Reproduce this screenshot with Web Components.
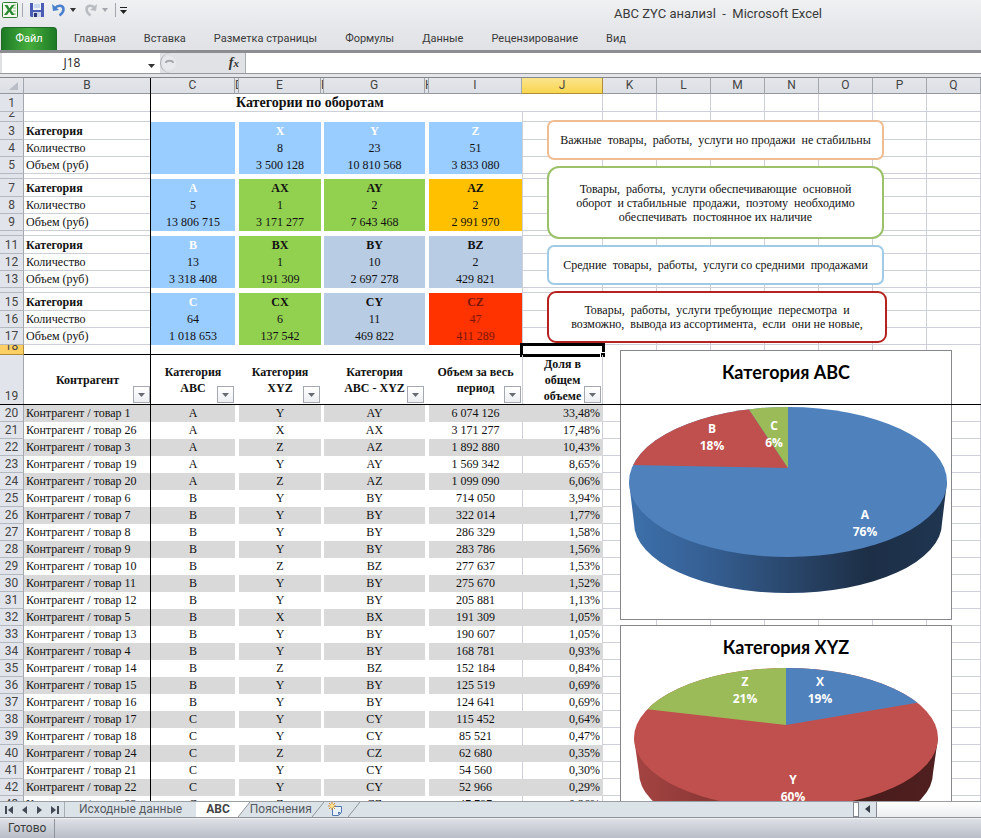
<!DOCTYPE html>
<html lang="ru">
<head>
<meta charset="utf-8">
<title>ABC ZYC анализl - Microsoft Excel</title>
<style>
  html, body { height: 100%; margin: 0; }
  body {
    display: flex;
    flex-direction: column;
    overflow: hidden;
    background: #e3e5e9;
    color: #3b3b3b;
    font: 12px/16px Roboto, "Open Sans", sans-serif;
  }
  work-sheet { flex: 1; min-height: 0; }
</style>
</head>
<body>
<title-bar>ABC ZYC анализl &nbsp;-&nbsp; Microsoft Excel</title-bar>
<ribbon-tabs></ribbon-tabs>
<formula-bar cell="J18"></formula-bar>
<work-sheet>
  <note-box slot="notes" color="#f0bd92">Важные&nbsp; товары,&nbsp; работы,&nbsp; услуги но продажи&nbsp; не стабильны</note-box>
  <note-box slot="notes" color="#9bc268" size="large">Товары,&nbsp; работы,&nbsp; услуги обеспечивающие&nbsp; основной<br>оборот&nbsp; и стабильные&nbsp; продажи,&nbsp; поэтому&nbsp; необходимо<br>обеспечивать&nbsp; постоянное их наличие</note-box>
  <note-box slot="notes" color="#9fcbe6">Средние&nbsp; товары,&nbsp; работы,&nbsp; услуги со средними&nbsp; продажами</note-box>
  <note-box slot="notes" color="#b5221f" size="medium">Товары,&nbsp; работы,&nbsp; услуги требующие&nbsp; пересмотра&nbsp; и<br>возможно,&nbsp; вывода из ассортимента,&nbsp; если&nbsp; они не новые,</note-box>
  <pie-chart slot="charts" kind="abc">Категория ABC</pie-chart>
  <pie-chart slot="charts" kind="xyz">Категория XYZ</pie-chart>
</work-sheet>
<sheet-tabs></sheet-tabs>
<status-bar>Готово</status-bar>

<script>
class TitleBar extends HTMLElement {
  constructor() {
    super();
    this.attachShadow({ mode: "open" });
    this.shadowRoot.innerHTML = `
      <style>
        :host {
          display: grid;
          grid-template-columns: 1fr auto 159px;
          height: 27px;
          background: linear-gradient(#f0f1f3, #e5e7ea);
        }
        .quick { display: flex; align-items: center; height: 20px; padding-left: 2px; }
        button { display: flex; padding: 0; border: 0; background: none; }
        .sep { width: 1px; height: 14px; background: #a3a7ad; }
        .save { margin: 0 8px 0 7px; }
        .excel { margin-right: 4px; }
        .undo, .redo { margin-right: 4px; }
        .redo { margin-left: 8px; }
        .last { margin-left: 7px; margin-right: 4px; }
        h1 { margin: 0; padding-top: 5px; font: 13px/18px Roboto, "Open Sans", sans-serif; }
      </style>
      <div class="quick">
        <button class="excel" aria-label="Excel">
          <svg width="16" height="16" viewBox="0 0 16 16">
            <rect x=".5" y=".5" width="15" height="15" rx="1" fill="#f3faee" stroke="#2f7d32"/>
            <path d="M11 3h3M11 6h3M11 9h3M11 12h3" stroke="#8cbf7e"/>
            <path d="M2.500 3h3l2 3.200L9.800 3h2.700L9 8l3.700 5H9.500L7.300 9.800 5 13H2l3.800-5z" fill="#2d8a34"/>
          </svg>
        </button>
        <span class="sep"></span>
        <button class="save" aria-label="Сохранить">
          <svg width="14" height="14" viewBox="0 0 14 14">
            <path d="M0 0h14v14H1L0 13z" fill="#4a5cb4"/>
            <path d="M3 0h8v7H3z" fill="#eef3fb"/>
            <path d="M4 2h6M4 4h6" stroke="#a6bce0"/>
            <path d="M3 9h8v5H3z" fill="#c9d2e8"/>
            <path d="M4 10h3v4H4z" fill="#2a3678"/>
          </svg>
        </button>
        <button class="undo" aria-label="Отменить">
          <svg width="14" height="14" viewBox="0 0 14 14">
            <path d="M3 5C6 1.500 11.500 2 11.500 6.500c0 2.500-2 4.500-4 6" fill="none" stroke="#4a80cc" stroke-width="2.600"/>
            <path d="M0 1l1 7 6-1z" fill="#4a80cc"/>
          </svg>
        </button>
        <button aria-label="Список отмены"><svg width="6" height="4"><path d="M0 0h6L3 4z" fill="#333"/></svg></button>
        <button class="redo" aria-label="Вернуть">
          <svg width="14" height="14" viewBox="0 0 14 14">
            <path d="M11 5C8 1.500 2.500 2 2.500 6.500c0 2.500 2 4.500 4 6" fill="none" stroke="#b9bcc1" stroke-width="2.600"/>
            <path d="M13 1l-1 7-6-1z" fill="#b9bcc1"/>
          </svg>
        </button>
        <button aria-label="Список возврата"><svg width="6" height="4"><path d="M0 0h6L3 4z" fill="#a4a7ac"/></svg></button>
        <span class="sep last"></span>
        <button aria-label="Настройка панели"><svg width="7" height="7"><path d="M0 0h7v1H0zM0 3h7L3.500 7z" fill="#222"/></svg></button>
      </div>
      <h1><slot></slot></h1>
    `;
  }
}

class RibbonTabs extends HTMLElement {
  constructor() {
    super();
    this.attachShadow({ mode: "open" });
    const tabs = ["Главная", "Вставка", "Разметка страницы", "Формулы", "Данные", "Рецензирование", "Вид"];
    this.shadowRoot.innerHTML = `
      <style>
        :host {
          display: block;
          background: linear-gradient(#e5e7ea, #e0e2e6);
          border-bottom: 3px solid #8b8d91;
        }
        nav { display: flex; height: 23px; padding-left: 1px; }
        button {
          padding: 0 14px;
          border: 0;
          background: none;
          color: #3b3b3b;
          font: 11px/16px Roboto, "Open Sans", sans-serif;
        }
        .file {
          width: 56px;
          margin-right: 3px;
          padding: 0;
          border: 1px solid #1f6a26;
          border-bottom: 0;
          border-radius: 4px 4px 0 0;
          background: linear-gradient(90deg, #1d7a25, #46ad3c 50%, #1d7a25);
          color: #fff;
        }
      </style>
      <nav>
        <button class="file">Файл</button>
        ${tabs.map((tab) => `<button>${tab}</button>`).join("")}
      </nav>
    `;
  }
}

class FormulaBar extends HTMLElement {
  constructor() {
    super();
    this.attachShadow({ mode: "open" });
    this.shadowRoot.innerHTML = `
      <style>
        :host {
          display: flex;
          height: 20px;
          padding-left: 2px;
          background: #dfe1e5;
          border-bottom: 1px solid #96999e;
          margin-bottom: 3px;
        }
        input { box-sizing: border-box; border: 0; margin: 0; padding: 0; outline: 0; background: #fff; color: #222; }
        .name { width: 140px; text-align: center; font: 12px/20px "Open Sans", "Noto Sans", sans-serif; }
        .drop { width: 18px; padding: 0; border: 0; background: #fff; }
        .fx {
          box-sizing: border-box;
          display: flex;
          align-items: center;
          justify-content: space-between;
          width: 86px;
          padding: 0 6px 0 0;
          border: 1px solid #a9acb1;
          border-width: 0 1px;
          border-radius: 10px 0 0 10px;
          background: #e0e2e6;
          color: #333;
          font: italic bold 14px/18px "Liberation Serif", serif;
        }
        .fx small { font-size: 11px; }
        .formula { flex: 1; min-width: 0; }
      </style>
      <input class="name" aria-label="Имя" value="${this.getAttribute("cell")}">
      <button class="drop" aria-label="Список имён"><svg width="7" height="4"><path d="M0 0h7L3.500 4z" fill="#333"/></svg></button>
      <button class="fx" aria-label="Вставить функцию">
        <svg width="16" height="16" viewBox="0 0 16 16">
          <circle cx="8" cy="8" r="7" fill="#e8e9ec"/>
          <path d="M5 8c0-3 7-3 7 0" fill="none" stroke="#a6a9ae" stroke-width="2"/>
        </svg>
        <span>f<small>x</small></span>
      </button>
      <input class="formula" aria-label="Формула">
    `;
  }
}

class NoteBox extends HTMLElement {
  constructor() {
    super();
    this.attachShadow({ mode: "open" });
    this.shadowRoot.innerHTML = `
      <style>
        :host {
          box-sizing: border-box;
          display: flex;
          align-items: center;
          justify-content: center;
          width: 337px;
          height: 40px;
          border: 2px solid ${this.getAttribute("color")};
          border-radius: 7px;
          background: #fff;
          color: #111;
          text-align: center;
          white-space: nowrap;
          font: 12px/14px "Liberation Serif", serif;
        }
        :host([size="medium"]) { width: 340px; height: 52px; border-radius: 9px; }
        :host([size="large"]) { height: 73px; border-radius: 12px; }
      </style>
      <p><slot></slot></p>
    `;
  }
}

// Geometry of each pie: the top ellipse, the lower rim, the point where the
// slices meet, and the slices laid over the base colour.
const PIES = {
  abc: {
    base: "#4f81bd",
    top: [168, 132, 159, 75],
    rim: [168, 173, 154, 70],
    wedges: [
      ["#c0504d", "168,118 7,115 7,40 116,40"],
      ["#9bbb59", "168,118 116,40 168,40"]
    ],
    shade: [["0", "#3d70ab"], [".25", "#355f93"], [".5", "#2a476c"], [".75", "#1d2f47"], ["1", "#1f3550"]],
    labels: [["B", "18%", 92, 83], ["C", "6%", 154, 80], ["A", "76%", 245, 169]]
  },
  xyz: {
    base: "#c0504d",
    top: [166, 113, 152, 70],
    rim: [166, 148, 147, 66],
    wedges: [
      ["#4f81bd", "166,100 166,30 320,30 320,74"],
      ["#9bbb59", "166,100 166,30 8,30 8,82"]
    ],
    shade: [["0", "#a54442"], [".25", "#8b3836"], [".5", "#6d2b2a"], [".8", "#4a1c1b"], ["1", "#4f201f"]],
    labels: [["Z", "21%", 125, 61], ["X", "19%", 200, 61], ["Y", "60%", 173, 159]]
  }
};

class PieChart extends HTMLElement {
  constructor() {
    super();
    this.attachShadow({ mode: "open" });
    const pie = PIES[this.getAttribute("kind")];
    const [cx, cy, rx, ry] = pie.top;
    const [bx, by, brx, bry] = pie.rim;
    this.shadowRoot.innerHTML = `
      <style>
        :host {
          box-sizing: border-box;
          display: block;
          width: 332px;
          height: 270px;
          border: 1px solid #85878b;
          background: #fff;
        }
        h2 {
          margin: 0;
          color: #000;
          text-align: center;
          font: bold 18px/42px Lato, "Open Sans", sans-serif;
        }
        svg { display: block; overflow: visible; }
        text {
          fill: #fff;
          text-anchor: middle;
          font: bold 12px "Open Sans", "Noto Sans", sans-serif;
        }
      </style>
      <h2><slot></slot></h2>
      <svg width="330" height="226" viewBox="1 43 330 226">
        <defs>
          <linearGradient id="side">
            ${pie.shade.map(([at, color]) => `<stop offset="${at}" stop-color="${color}"/>`).join("")}
          </linearGradient>
          <clipPath id="face"><ellipse cx="${cx}" cy="${cy}" rx="${rx}" ry="${ry}"/></clipPath>
        </defs>
        <path fill="url(#side)" d="M${cx - rx} ${cy}L${bx - brx} ${by}A${brx} ${bry} 0 0 0 ${bx + brx} ${by}L${cx + rx} ${cy}z"/>
        <g clip-path="url(#face)">
          <rect width="332" height="270" fill="${pie.base}"/>
          ${pie.wedges.map(([color, points]) => `<polygon fill="${color}" points="${points}"/>`).join("")}
        </g>
        ${pie.labels.map(([name, share, x, y]) => `
          <text x="${x}" y="${y}">${name}</text>
          <text x="${x}" y="${y + 17}">${share}</text>`).join("")}
      </svg>
    `;
  }
}

const COLUMNS = [
  ["B", 127], ["C", 84], ["D", 4], ["E", 82], ["F", 3], ["G", 101], ["H", 4], ["I", 93], ["J", 81],
  ["K", 54], ["L", 54], ["M", 54], ["N", 54], ["O", 54], ["P", 54], ["Q", 0]
];

// Matrix blocks: first row number, then [style, title, count, amount] for C, E, G, I
const BLOCKS = [
  [3, ["head", "", "", ""], ["head", "X", "8", "3 500 128"], ["head", "Y", "23", "10 810 568"], ["head", "Z", "51", "3 833 080"]],
  [7, ["head", "A", "5", "13 806 715"], ["green", "AX", "1", "3 171 277"], ["green", "AY", "2", "7 643 468"], ["amber", "AZ", "2", "2 991 970"]],
  [11, ["head", "B", "13", "3 318 408"], ["green", "BX", "1", "191 309"], ["pale", "BY", "10", "2 697 278"], ["pale", "BZ", "2", "429 821"]],
  [15, ["head", "C", "64", "1 018 653"], ["green", "CX", "6", "137 542"], ["pale", "CY", "11", "469 822"], ["red", "CZ", "47", "411 289"]]
];

const ITEMS = [
  [1, "A", "Y", "6 074 126", "33,48%"],
  [26, "A", "X", "3 171 277", "17,48%"],
  [3, "A", "Z", "1 892 880", "10,43%"],
  [19, "A", "Y", "1 569 342", "8,65%"],
  [20, "A", "Z", "1 099 090", "6,06%"],
  [6, "B", "Y", "714 050", "3,94%"],
  [7, "B", "Y", "322 014", "1,77%"],
  [8, "B", "Y", "286 329", "1,58%"],
  [9, "B", "Y", "283 786", "1,56%"],
  [10, "B", "Z", "277 637", "1,53%"],
  [11, "B", "Y", "275 670", "1,52%"],
  [12, "B", "Y", "205 881", "1,13%"],
  [5, "B", "X", "191 309", "1,05%"],
  [13, "B", "Y", "190 607", "1,05%"],
  [4, "B", "Y", "168 781", "0,93%"],
  [14, "B", "Z", "152 184", "0,84%"],
  [15, "B", "Y", "125 519", "0,69%"],
  [16, "B", "Y", "124 641", "0,69%"],
  [17, "C", "Y", "115 452", "0,64%"],
  [18, "C", "Y", "85 521", "0,47%"],
  [24, "C", "Z", "62 680", "0,35%"],
  [21, "C", "Y", "54 560", "0,30%"],
  [22, "C", "Y", "52 966", "0,29%"],
  [23, "C", "Z", "47 787", "0,26%"]
];

class WorkSheet extends HTMLElement {
  constructor() {
    super();
    this.attachShadow({ mode: "open" });
    this.shadowRoot.innerHTML = `
      <style>
        :host {
          display: block;
          position: relative;
          overflow: hidden;
          border-top: 1px solid #85888d;
          background: #fff;
        }
        table {
          width: 100%;
          table-layout: fixed;
          border-collapse: separate;
          border-spacing: 0;
          color: #111;
          font: 12px/15px "Liberation Serif", serif;
        }
        th, td { box-sizing: border-box; padding: 0; white-space: nowrap; }
        thead th {
          height: 16px;
          overflow: hidden;
          border-right: 1px solid #a2a6ad;
          border-bottom: 1px solid #94989f;
          background: linear-gradient(#e4e6ea, #dcdfe4);
          color: #444;
          font: 12px/15px Roboto, "Open Sans", sans-serif;
        }
        thead svg { display: block; }
        thead .current { background: linear-gradient(#fbe48d, #f8d64f); border-color: #b08d3c; }
        tbody th {
          border-right: 1px solid #a2a6ad;
          border-bottom: 1px solid #b4b8bf;
          background: #e1e4ea;
          color: #444;
          font: 12px/15px Roboto, "Open Sans", sans-serif;
        }
        tbody th div { display: flex; align-items: flex-end; justify-content: center; overflow: hidden; }
        tbody .current { background: #fdcf62; border-color: #b08d3c; }
        td { padding-bottom: 1px; text-align: center; vertical-align: bottom; }
        .grid { border-right: 1px solid #cdd0d8; border-bottom: 1px solid #cdd0d8; }
        .left { border-left: 1px solid #cdd0d8; }
        .under { padding-bottom: 0; border-bottom: 1px solid #cdd0d8; }
        .side { border-right: 1px solid #cdd0d8; }
        .text { padding-left: 2px; text-align: left; }
        .share { padding-right: 2px; text-align: right; }
        .band.share { border-right: 1px solid #d9d9d9; }
        .bold { font-weight: bold; }
        .caption { padding-left: 1px; text-align: left; font: bold 14px/16px "Liberation Serif", serif; }
        .head { background: #99ccff; }
        .head.bold { color: #fff; }
        .green { background: #92d050; }
        .amber { background: #ffc000; }
        .pale { background: #b8cce4; }
        .red { background: #ff3300; color: #7c1608; }
        .band { background: #d9d9d9; }
        .edge { border-bottom: 1px solid #000; }
        .title { position: relative; padding: 0; vertical-align: middle; font-weight: bold; line-height: 16px; }
        .title button {
          position: absolute;
          right: 1px;
          bottom: 2px;
          display: flex;
          align-items: center;
          justify-content: center;
          width: 17px;
          height: 17px;
          padding: 0;
          border: 1px solid #a4a8b0;
          background: linear-gradient(#fff, #eceef2);
        }
        .cursor { position: relative; }
        .cursor i {
          position: absolute;
          inset: -2px -2px -3px;
          border: 3px solid #000;
          border-bottom-width: 2px;
        }
        .cursor i::after {
          content: "";
          position: absolute;
          right: -4px;
          bottom: -3px;
          width: 4px;
          height: 4px;
          border: 1px solid #fff;
          background: #000;
        }
        .notes, .charts { position: absolute; display: flex; flex-direction: column; }
        .notes { left: 547px; top: 42px; gap: 6px; }
        .charts { left: 620px; top: 272px; gap: 5px; }
        .freeze { position: absolute; background: #000; }
        .freeze.down { left: 150px; top: 0; bottom: 0; width: 1px; }
        .freeze.across { left: 0; right: 0; top: 326px; height: 1px; }
      </style>
      <table>
        <colgroup>
          <col style="width: 24px">
          ${COLUMNS.map(([, width]) => `<col${width ? ` style="width: ${width}px"` : ""}>`).join("")}
        </colgroup>
        <thead>
          <tr>
            <th><svg width="20" height="12"><path d="M18 2v8H9z" fill="#b9bdc5"/></svg></th>
            ${COLUMNS.map(([name]) => `<th${name === "J" ? ' class="current"' : ""}>${name}</th>`).join("")}
          </tr>
        </thead>
        <tbody>${this.renderRows()}</tbody>
      </table>
      <div class="notes"><slot name="notes"></slot></div>
      <div class="charts"><slot name="charts"></slot></div>
      <div class="freeze down"></div>
      <div class="freeze across"></div>
    `;
  }

  row(number, height, cells) {
    const current = number === 18 ? ' class="current"' : "";
    return `
      <tr style="height: ${height}px">
        <th${current}><div style="height: ${height - 1}px">${number}</div></th>
        ${cells}
      </tr>`;
  }

  cell(style, text = "", span = 1) {
    return `<td class="${style}"${span > 1 ? ` colspan="${span}"` : ""}>${text}</td>`;
  }

  free(style = "grid") {
    return this.cell(style).repeat(7);
  }

  spacer(number, height) {
    return this.row(number, height,
      this.cell("under") + this.cell("", "", 7) + this.cell("grid left") + this.free());
  }

  renderRows() {
    const rows = [];
    rows.push(this.row(1, 18,
      this.cell("under") + this.cell("under") + this.cell("under caption", "Категории по оборотам", 6) +
      this.cell("grid") + this.free()));
    rows.push(this.spacer(2, 10));

    BLOCKS.forEach(([first, ...groups]) => {
      ["Категория", "Количество", "Объем (руб)"].forEach((label, line) => {
        const bold = line === 0 ? " bold" : "";
        const boxes = groups.map((group) => this.cell(group[0] + bold, group[line + 1]));
        rows.push(this.row(first + line, line === 0 ? 18 : 17,
          this.cell("under text" + bold, label) + boxes.join(this.cell("")) +
          this.cell("grid left") + this.free()));
      });
      if (first < 15) rows.push(this.spacer(first + 3, 5));
    });

    rows.push(this.row(18, 10,
      this.cell("edge").repeat(8) + this.cell("edge cursor", "<i></i>") + this.free("side")));

    const filter = (name) => `${name}<button aria-label="Фильтр"><svg width="7" height="4"><path d="M0 0h7L3.500 4z" fill="#666a72"/></svg></button>`;
    rows.push(this.row(19, 50,
      this.cell("title", filter("Контрагент")) +
      this.cell("title", filter("Категория<br>ABC")) + this.cell("") +
      this.cell("title", filter("Категория<br>XYZ")) + this.cell("") +
      this.cell("title", filter("Категория<br>ABC - XYZ")) + this.cell("") +
      this.cell("title", filter("Объем за весь<br>период")) +
      this.cell("title left side", filter("Доля в<br>общем<br>объеме")) + this.free("side")));

    ITEMS.forEach(([id, abc, xyz, amount, share], i) => {
      const band = i % 2 === 0 ? "band" : "";
      rows.push(this.row(20 + i, 17,
        this.cell(`${band} text`, `Контрагент / товар ${id}`) +
        this.cell(band, abc) + this.cell("") +
        this.cell(band, xyz) + this.cell("") +
        this.cell(band, abc + xyz) + this.cell("") +
        this.cell(band, amount) +
        this.cell(band ? "band share" : "left side share", share) + this.free()));
    });
    return rows.join("");
  }
}

class SheetTabs extends HTMLElement {
  constructor() {
    super();
    this.attachShadow({ mode: "open" });
    this.shadowRoot.innerHTML = `
      <style>
        :host {
          display: flex;
          height: 15px;
          border-top: 1px solid #9a9ea5;
          border-bottom: 1px solid #8f9399;
          background: #dce3e8;
        }
        button { padding: 0; border: 0; background: none; color: #555a61; font: 12px/15px Roboto, "Open Sans", sans-serif; }
        .nav { display: flex; align-items: center; gap: 8px; padding: 0 5px; }
        .nav button { display: flex; }
        .tabs { display: flex; flex: 1; border-left: 1px solid #a8acb3; }
        .tab { padding: 0 14px; }
        .tab.active { padding: 0 8px 0 10px; background: #fff; font-weight: bold; color: #444; }
        .slant { display: block; width: 12px; height: 15px; }
        .new { display: flex; padding: 0 4px; }
        .scroll { display: flex; width: 128px; }
        .grip { box-sizing: border-box; width: 6px; border: 1px solid #85898f; background: #fff; }
        .scroll button { width: 17px; }
        .thumb { flex: 1; border-left: 1px solid #85898f; background: linear-gradient(#fff, #eceef1); }
      </style>
      <div class="nav">
        <button aria-label="Первый лист"><svg width="8" height="8"><path d="M0 0h2v8H0zM8 0v8L3 4z" fill="#444a55"/></svg></button>
        <button aria-label="Предыдущий лист"><svg width="7" height="8"><path d="M6 0v8L1 4z" fill="#444a55"/></svg></button>
        <button aria-label="Следующий лист"><svg width="7" height="8"><path d="M1 0v8l5-4z" fill="#444a55"/></svg></button>
        <button aria-label="Последний лист"><svg width="8" height="8"><path d="M6 0h2v8H6zM0 0v8l5-4z" fill="#444a55"/></svg></button>
      </div>
      <div class="tabs">
        <button class="tab">Исходные данные</button>
        <button class="tab active">ABC</button>
        <svg class="slant"><path d="M0 0h12L0 15z" fill="#fff"/><path d="M12 0L0 15" stroke="#8f949c"/></svg>
        <button>Пояснения</button>
        <svg class="slant"><path d="M12 0L0 15" stroke="#8f949c"/></svg>
        <button class="new" aria-label="Вставить лист">
          <svg width="16" height="15" viewBox="0 0 16 15">
            <path d="M4.500 4.500h9v6l-3 3h-6z" fill="#e9f1fb" stroke="#5379b4"/>
            <path d="M13 10l-3 3v-3z" fill="#5379b4"/>
            <path d="M4 0v8M0 4h8M1 1l6 6M7 1L1 7" stroke="#d48a26"/>
            <circle cx="4" cy="4" r="2" fill="#ffe28a"/>
          </svg>
        </button>
        <svg class="slant"><path d="M12 0L0 15" stroke="#8f949c"/></svg>
      </div>
      <div class="scroll">
        <span class="grip"></span>
        <button aria-label="Прокрутить влево"><svg width="5" height="8"><path d="M5 0v8L0 4z" fill="#333a44"/></svg></button>
        <span class="thumb"></span>
      </div>
    `;
  }
}

class StatusBar extends HTMLElement {
  constructor() {
    super();
    this.attachShadow({ mode: "open" });
    this.shadowRoot.innerHTML = `
      <style>
        :host {
          display: flex;
          height: 19px;
          border-top: 1px solid #eef0f2;
          background: linear-gradient(#dde0e5, #b9bec8);
          line-height: 19px;
        }
        span { padding: 0 8px; border-right: 1px solid #8f949c; }
      </style>
      <span><slot></slot></span>
    `;
  }
}

customElements.define("title-bar", TitleBar);
customElements.define("ribbon-tabs", RibbonTabs);
customElements.define("formula-bar", FormulaBar);
customElements.define("note-box", NoteBox);
customElements.define("pie-chart", PieChart);
customElements.define("work-sheet", WorkSheet);
customElements.define("sheet-tabs", SheetTabs);
customElements.define("status-bar", StatusBar);
</script>
</body>
</html>
